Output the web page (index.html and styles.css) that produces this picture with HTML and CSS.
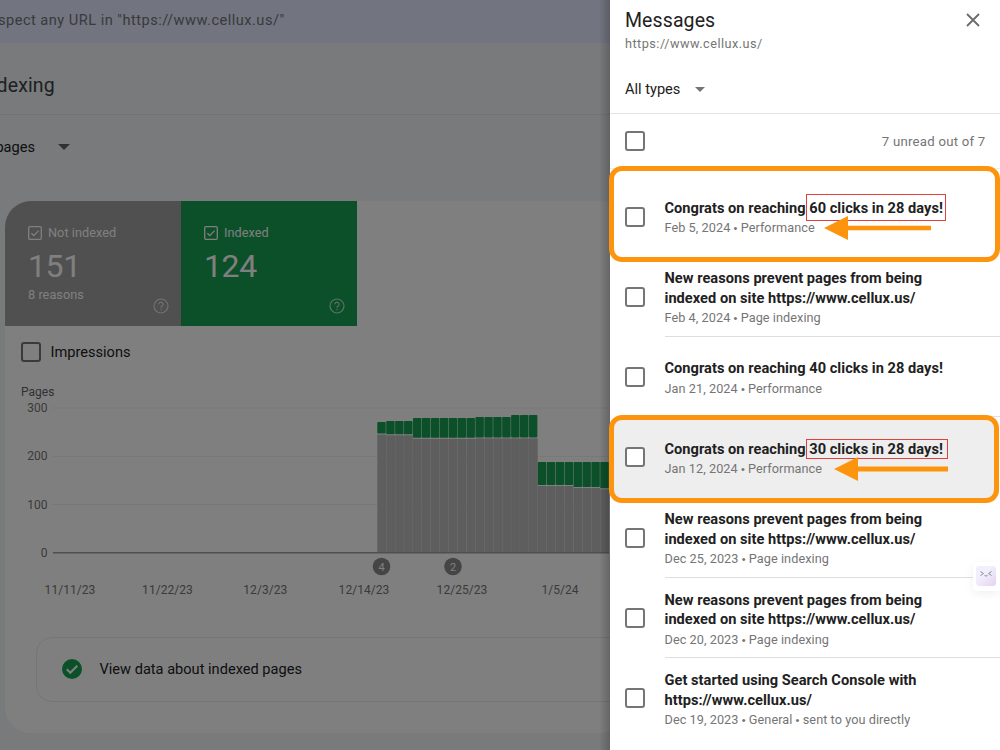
FILE: index.html
```html
<!DOCTYPE html>
<html lang="en">
<head>
    <meta charset="UTF-8">
    <meta name="viewport" content="width=device-width, initial-scale=1.0">
    <title>Page indexing</title>
    <link rel="stylesheet" href="styles.css">
</head>
<body>
    <div class="app">
        <main class="main">
            <div class="search-bar"><span class="search-text">Inspect any URL in "https://www.cellux.us/"</span></div>
            <div class="page-title"><h1>Page indexing</h1></div>
            <div class="filter">
                <span class="filter-text">All known pages</span>
                <span class="caret"></span>
            </div>

            <section class="card">
                <div class="tiles">
                    <div class="tile">
                        <div class="tile-label">
                            <svg width="14" height="14" viewBox="0 0 14 14"><rect x=".7" y=".7" width="12.6" height="12.6" rx="1.2"/><path d="M3.4 7.2l2.4 2.4 4.8-5"/></svg>
                            Not indexed
                        </div>
                        <div class="tile-value">151</div>
                        <div class="tile-note">8 reasons</div>
                        <svg class="help" width="16" height="16" viewBox="0 0 16 16"><circle cx="8" cy="8" r="7"/><path d="M5.9 6.3a2.1 2.1 0 1 1 3.3 1.7c-.8.6-1.2.9-1.2 1.7M8 11v1.3"/></svg>
                    </div>
                    <div class="tile tile-green">
                        <div class="tile-label">
                            <svg width="14" height="14" viewBox="0 0 14 14"><rect x=".7" y=".7" width="12.6" height="12.6" rx="1.2"/><path d="M3.4 7.2l2.4 2.4 4.8-5"/></svg>
                            Indexed
                        </div>
                        <div class="tile-value">124</div>
                        <svg class="help" width="16" height="16" viewBox="0 0 16 16"><circle cx="8" cy="8" r="7"/><path d="M5.9 6.3a2.1 2.1 0 1 1 3.3 1.7c-.8.6-1.2.9-1.2 1.7M8 11v1.3"/></svg>
                    </div>
                </div>

                <div class="impressions">
                    <span class="checkbox"></span>
                    <span>Impressions</span>
                </div>

                <svg class="chart" width="604" height="228" viewBox="5 380 604 228">
                    <text class="axis-title" x="21" y="395.5">Pages</text>
                    <g class="axis" text-anchor="end">
                        <text x="47.5" y="412">300</text>
                        <text x="47.5" y="460">200</text>
                        <text x="47.5" y="508.5">100</text>
                        <text x="47.5" y="556.7">0</text>
                    </g>
                    <g class="grid">
                        <path d="M53 408h557M53 456.3h557M53 504.6h557"/>
                    </g>
                    <g id="bars"></g>
                    <path class="baseline" d="M53 552.7h557"/>
                    <g class="marker" text-anchor="middle">
                        <circle cx="381.5" cy="566.5" r="8.8"/>
                        <text x="381.5" y="570.5">4</text>
                        <circle cx="453" cy="566.5" r="8.8"/>
                        <text x="453" y="570.5">2</text>
                    </g>
                    <g class="axis axis-dates" text-anchor="middle">
                        <text x="70" y="594">11/11/23</text>
                        <text x="167.5" y="594">11/22/23</text>
                        <text x="265.3" y="594">12/3/23</text>
                        <text x="364" y="594">12/14/23</text>
                        <text x="462" y="594">12/25/23</text>
                        <text x="560" y="594">1/5/24</text>
                    </g>
                </svg>

                <div class="view-data">
                    <svg width="20" height="20" viewBox="0 0 20 20"><circle cx="10" cy="10" r="10" fill="#18a055"/><path d="M4.8 10.3l3.5 3.5 7-7" fill="none" stroke="#fff" stroke-width="2"/></svg>
                    <span>View data about indexed pages</span>
                </div>
            </section>
            <div class="scrim"></div>
        </main>

        <aside class="panel">
            <header class="panel-header">
                <div class="panel-top">
                    <h2>Messages</h2>
                    <svg class="close" width="14" height="14" viewBox="0 0 14 14"><path d="M1 1l12 12M13 1L1 13"/></svg>
                </div>
                <div class="panel-url">https://www.cellux.us/</div>
                <div class="types">All types <span class="caret caret-small"></span></div>
            </header>
            <div class="select-all">
                <span class="checkbox"></span>
                <span class="unread">7 unread out of 7</span>
            </div>

            <div class="messages">
                <div class="message framed frame-first">
                    <span class="checkbox"></span>
                    <div class="message-body">
                        <div class="subject">Congrats on reaching <span class="mark mark-first">60 clicks in 28 days!</span></div>
                        <div class="meta">Feb 5, 2024 <i>•</i> Performance</div>
                    </div>
                    <svg class="arrow arrow-first" width="108" height="24" viewBox="0 0 108 24"><path d="M0 12L24 0v9.8h83v4.4H24V24z"/></svg>
                </div>
                <div class="message">
                    <span class="checkbox"></span>
                    <div class="message-body">
                        <div class="subject">New reasons prevent pages from being<br>indexed on site https://www.cellux.us/</div>
                        <div class="meta">Feb 4, 2024 <i>•</i> Page indexing</div>
                    </div>
                </div>
                <div class="message">
                    <span class="checkbox"></span>
                    <div class="message-body">
                        <div class="subject">Congrats on reaching 40 clicks in 28 days!</div>
                        <div class="meta">Jan 21, 2024 <i>•</i> Performance</div>
                    </div>
                </div>
                <div class="message framed frame-second">
                    <span class="checkbox"></span>
                    <div class="message-body">
                        <div class="subject">Congrats on reaching <span class="mark mark-second">30 clicks in 28 days!</span></div>
                        <div class="meta">Jan 12, 2024 <i>•</i> Performance</div>
                    </div>
                    <svg class="arrow arrow-second" width="115" height="24" viewBox="0 0 115 24"><path d="M0 12L24 0v9.6h90v5H24V24z"/></svg>
                </div>
                <div class="message">
                    <span class="checkbox"></span>
                    <div class="message-body">
                        <div class="subject">New reasons prevent pages from being<br>indexed on site https://www.cellux.us/</div>
                        <div class="meta">Dec 25, 2023 <i>•</i> Page indexing</div>
                    </div>
                </div>
                <div class="message">
                    <span class="checkbox"></span>
                    <div class="message-body">
                        <div class="subject">New reasons prevent pages from being<br>indexed on site https://www.cellux.us/</div>
                        <div class="meta">Dec 20, 2023 <i>•</i> Page indexing</div>
                    </div>
                </div>
                <div class="message">
                    <span class="checkbox"></span>
                    <div class="message-body">
                        <div class="subject">Get started using Search Console with<br>https://www.cellux.us/</div>
                        <div class="meta">Dec 19, 2023 <i>•</i> General <i>•</i> sent to you directly</div>
                    </div>
                </div>
            </div>

            <div class="extension">
                <svg width="20" height="20" viewBox="0 0 20 20"><path d="M4.5 5.5l3 2-3 2M15.5 5.5l-3 2 3 2M8.5 9.5q1.5 1.2 3 0"/></svg>
            </div>
        </aside>
    </div>

    <script>
        // [number of days, top of indexed, bottom of indexed]
        const days = [
            [1, 422, 433.5], [3, 421, 434.3], [7, 418, 437.8], [4, 417, 437.4],
            [3, 415, 437.4], [4, 462, 485], [3, 462, 487], [1, 462, 488.3]
        ];
        const step = 8.92;
        let x = 377.3;
        let html = '';
        days.forEach(([count, top, bottom]) => {
            for (let i = 0; i < count; i++) {
                html += `<rect class="bar-indexed" x="${x}" y="${top}" width="${step - 0.5}" height="${bottom - top}" rx="0.8"/>`;
                html += `<rect class="bar-not" x="${x}" y="${bottom + 1}" width="${step - 0.15}" height="${552 - bottom}"/>`;
                x += step;
            }
        });
        document.getElementById('bars').innerHTML = html;
    </script>
</body>
</html>
```
FILE: styles.css
```css
*,
*::before,
*::after {
    box-sizing: border-box;
}
body {
    margin: 0;
    font-family: Roboto, "Liberation Sans", Arial, sans-serif;
    color: #202124;
}
.app {
    display: flex;
    width: 1000px;
    height: 750px;
    overflow: hidden;
}
.main {
    position: relative;
    width: 610px;
    height: 750px;
    flex: none;
    overflow: hidden;
    background-color: #f0f5f9;
}
.scrim {
    position: absolute;
    inset: 0;
    background: linear-gradient(to left, rgba(0, 0, 0, 0.2), rgba(0, 0, 0, 0) 11px), rgba(0, 0, 0, 0.5);
}
.search-bar {
    display: flex;
    align-items: center;
    justify-content: flex-start;
    height: 43px;
    padding-bottom: 3px;
    background-color: #e4eaff;
}
.search-text {
    margin-left: -15px;
    font-size: 14.6px;
    letter-spacing: 0.48px;
    color: #70757a;
}
.page-title {
    display: flex;
    align-items: center;
    height: 72px;
    border-bottom: 1px solid #e3e6ea;
}
h1 {
    margin: 14px 0 0 -69px;
    font-size: 19.5px;
    font-weight: 400;
    letter-spacing: 0.15px;
    color: #3c4043;
}
.filter {
    display: flex;
    align-items: center;
    gap: 23px;
    height: 86px;
    padding-bottom: 22px;
    font-size: 14.6px;
}
.filter-text {
    width: 35px;
    display: flex;
    justify-content: flex-end;
    white-space: nowrap;
}
.caret {
    width: 0;
    height: 0;
    border: 6px solid transparent;
    border-top-color: #5f6368;
    border-bottom: none;
}
.caret-small {
    border-width: 5px;
    border-bottom: none;
    border-top-color: #757575;
}
.card {
    margin-left: 5px;
    width: 620px;
    height: 532px;
    border-radius: 26px;
    overflow: hidden;
    background-color: #fff;
}
.tiles {
    display: flex;
    height: 124.5px;
}
.tile {
    position: relative;
    width: 176px;
    padding: 24px 23px 0;
    background-color: #a0a0a0;
    color: #fff;
    fill: none;
    stroke: #fff;
    font-size: 12.7px;
    letter-spacing: 0.05px;
    stroke-width: 1.3;
}
.tile-green {
    background-color: #18a055;
}
.tile-label {
    display: flex;
    align-items: center;
    gap: 6px;
    height: 15px;
}
.tile-value {
    margin-top: 6px;
    font-size: 32px;
    line-height: 40px;
    letter-spacing: -0.4px;
}
.tile-note {
    margin-top: 1px;
    line-height: 16px;
}
.help {
    position: absolute;
    right: 12px;
    bottom: 12px;
    opacity: 0.7;
    stroke-width: 1.2;
}
.impressions {
    display: flex;
    align-items: center;
    gap: 10px;
    height: 52px;
    padding-left: 15.5px;
    font-size: 14.6px;
    letter-spacing: 0;
}
.checkbox {
    width: 20px;
    height: 20px;
    flex: none;
    border: 2px solid #757575;
    border-radius: 3px;
    background-color: #fff;
}
.chart {
    display: block;
    margin-top: 2.5px;
}
.axis-title {
    font-size: 12px;
    fill: #5f6368;
}
.axis {
    font-size: 12px;
    fill: #757575;
}
.axis-dates {
    letter-spacing: 0.05px;
}
.grid {
    stroke: #ededed;
    stroke-width: 1;
}
.baseline {
    stroke: #9e9e9e;
    stroke-width: 1.4;
}
.bar-indexed {
    fill: #18a055;
}
.bar-not {
    fill: #bdbdbd;
}
.marker circle {
    fill: #8a8a8a;
}
.marker text {
    font-size: 11px;
    fill: #fff;
}
.view-data {
    display: flex;
    align-items: center;
    gap: 17.5px;
    width: 620px;
    height: 65px;
    margin: 28.5px 0 0 31px;
    padding-left: 25px;
    border: 1px solid #e8eaed;
    border-radius: 16px;
    font-size: 14.6px;
}
.panel {
    position: relative;
    width: 390px;
    height: 750px;
    background-color: #fff;
    color: #212121;
}
.panel-header {
    height: 114px;
    padding: 8px 20px 0 15px;
    border-bottom: 1px solid #e4e4e4;
}
.panel-top {
    display: flex;
    align-items: center;
    justify-content: space-between;
    height: 24px;
}
h2 {
    margin: 0;
    font-size: 19.5px;
    font-weight: 400;
    letter-spacing: 0.1px;
}
.close {
    fill: none;
    stroke: #6b6b6b;
    stroke-width: 1.8;
}
.panel-url {
    margin-top: 3px;
    font-size: 12.7px;
    line-height: 17px;
    letter-spacing: 0.48px;
    color: #757575;
}
.types {
    display: flex;
    align-items: center;
    gap: 15px;
    margin-top: 27px;
    font-size: 14.6px;
    line-height: 20px;
}
.select-all {
    display: flex;
    align-items: center;
    justify-content: space-between;
    height: 55px;
    padding: 0 14.5px 0 15px;
    border-bottom: 1px solid #ececec;
}
.unread {
    font-size: 13.2px;
    letter-spacing: 0.24px;
    color: #757575;
}
.messages {
    padding-top: 7.4px;
}
.message {
    position: relative;
    display: flex;
    align-items: center;
    height: 80.3px;
    padding-left: 15px;
}
.message-body {
    display: flex;
    flex-direction: column;
    justify-content: center;
    flex: 1;
    height: 80.3px;
    margin-left: 19.5px;
    padding-top: 5px;
    border-bottom: 1px solid #dedede;
}
.message:last-child .message-body {
    border-bottom: none;
}
.subject {
    font-size: 14.6px;
    font-weight: 700;
    line-height: 19.5px;
    letter-spacing: 0.035px;
    white-space: nowrap;
}
.meta {
    font-size: 12.7px;
    line-height: 19px;
    letter-spacing: 0.06px;
    color: #757575;
}
.meta i {
    font-family: "Liberation Sans", Arial, sans-serif;
    font-size: 11px;
    font-style: normal;
}
/* orange frame around the highlighted messages */
.framed::before {
    content: "";
    position: absolute;
    left: -1px;
    right: 0;
    border: 5px solid #fc940d;
    border-radius: 13px;
}
.framed .message-body {
    border-bottom-color: transparent;
}
.framed .checkbox,
.framed .message-body,
.arrow {
    z-index: 1;
}
.frame-first::before {
    top: -10.4px;
    height: 96px;
}
.frame-second::before {
    top: -2.4px;
    right: 1px;
    height: 88px;
    background-color: #eee;
}
.mark {
    position: relative;
}
.mark::after {
    content: "";
    position: absolute;
    border: 1.5px solid #e0423b;
}
.mark-first::after {
    inset: -5px -3px -4px -3px;
}
.mark-second::after {
    inset: -1px -5px -1px -3px;
}
.arrow {
    position: absolute;
    fill: #fc940d;
}
.arrow-first {
    left: 214px;
    top: 39.4px;
}
.arrow-second {
    left: 224px;
    top: 40px;
}
/* floating button of the browser extension */
.extension {
    position: absolute;
    right: 0;
    top: 562px;
    width: 27px;
    height: 29px;
    padding: 4px 3px;
    border-radius: 4px 0 0 4px;
    background-color: #fff;
    box-shadow: 0 3px 10px rgba(0, 0, 0, 0.06);
}
.extension svg {
    display: block;
    border-radius: 3px;
    background: linear-gradient(135deg, #f1effb 40%, #e5d2f3);
    fill: none;
    stroke: #8d8a9c;
}
```
